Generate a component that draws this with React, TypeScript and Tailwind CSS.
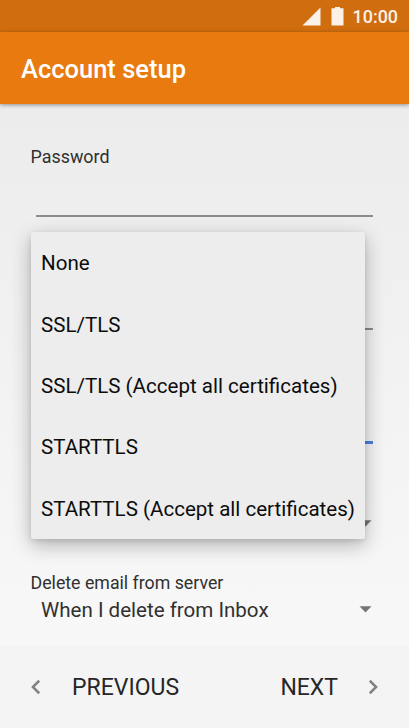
import { useState } from "react";

const SECURITY_OPTIONS = [
    "None",
    "SSL/TLS",
    "SSL/TLS (Accept all certificates)",
    "STARTTLS",
    "STARTTLS (Accept all certificates)",
];

function StatusBar() {
    return (
        <div className="flex h-8 shrink-0 items-center justify-end bg-[#cf6d0f] pr-[11px] text-[#fbf1e7]">
            <svg className="mr-[10px] h-[19px] w-[19px]" viewBox="0 0 19 19" fill="currentColor">
                <path d="M0.5 18.5 L18.5 0.5 V18.5 Z" />
            </svg>
            <svg className="mr-[9px] h-[19px] w-[13px]" viewBox="0 0 13 19" fill="currentColor">
                <path d="M4 0 H9 V1.3 H12.5 V18.5 H0.5 V1.3 H4 Z" />
            </svg>
            <span className="pt-px text-[17.9px] leading-8 font-medium">10:00</span>
        </div>
    );
}

function SpinnerArrow() {
    return (
        <svg className="h-[7px] w-[13px] text-[#757575]" viewBox="0 0 13 7" fill="currentColor">
            <path d="M0.5 0.3 H12.5 L6.5 6.5 Z" />
        </svg>
    );
}

function Chevron({ direction }: { direction: "left" | "right" }) {
    return (
        <svg className="h-4 w-[10px] text-[#828282]" viewBox="0 0 10 16" fill="none" stroke="currentColor" strokeWidth="2.5">
            <path d={direction === "left" ? "M9.2 1.7 L2.9 8 L9.2 14.3" : "M0.8 1.7 L7.1 8 L0.8 14.3"} />
        </svg>
    );
}

function SecurityMenu({ onSelect }: { onSelect: (option: string) => void }) {
    return (
        <ul className="absolute top-32 left-[30.5px] h-[307px] w-[334.5px] rounded-[2px] bg-[#ededed] shadow-[0_6px_20px_rgba(0,0,0,0.28),0_2px_5px_rgba(0,0,0,0.1)]">
            {SECURITY_OPTIONS.map(option => (
                <li key={option} className="h-[61.35px]">
                    <button
                        onClick={() => onSelect(option)}
                        className="block h-full w-full pt-[2px] pl-[10.5px] text-left text-[20.55px] whitespace-nowrap text-[#0c0c0c]"
                    >
                        {option}
                    </button>
                </li>
            ))}
        </ul>
    );
}

export default function App() {
    const [menuOpen, setMenuOpen] = useState(true);

    return (
        <div className="flex h-[728px] w-[409px] flex-col overflow-hidden bg-[#f4f4f4] font-['Roboto',sans-serif]">
            <StatusBar />
            <header className="relative z-10 flex h-[72px] shrink-0 items-center bg-[#e87a10] pt-[2px] pl-[21px] shadow-[0_1px_4px_rgba(0,0,0,0.4)]">
                <h1 className="text-[25.5px] font-medium text-white">Account setup</h1>
            </header>

            <main className="relative flex h-[541px] shrink-0 flex-col bg-linear-to-b from-[#ececec] to-[#f8f8f8] text-[#303030]">
                <label className="mt-[42px] ml-[30.5px] h-[22px] text-[17.9px] leading-[22px]">Password</label>
                <div className="mr-9 ml-9 h-[49px] border-b-2 border-[#8b8b8b]" />
                <div className="mr-9 ml-9 h-[113px] border-b-2 border-[#8b8b8b]" />
                <div className="mr-9 ml-9 h-[114px] border-b-[3px] border-[#4a80e0]" />
                <button onClick={() => setMenuOpen(true)} className="mr-[37px] flex h-[117px] items-start justify-end pt-[76px]">
                    <SpinnerArrow />
                </button>

                <label className="mt-[11px] ml-[30.5px] h-[22px] text-[17.75px] leading-[22px]">Delete email from server</label>
                <div className="mr-[37px] ml-[41px] flex h-8 items-center justify-between">
                    <span className="text-[20.55px]">When I delete from Inbox</span>
                    <span className="-mt-[2px]">
                        <SpinnerArrow />
                    </span>
                </div>

                {menuOpen && <SecurityMenu onSelect={() => setMenuOpen(false)} />}
            </main>

            <footer className="flex h-[83px] items-center justify-between pr-[30px] pl-[30px] text-[23px] text-[#262626]">
                <button className="flex items-center gap-8">
                    <Chevron direction="left" />
                    <span className="pt-[4px]">PREVIOUS</span>
                </button>
                <button className="flex items-center gap-[31px]">
                    <span className="pt-[4px]">NEXT</span>
                    <Chevron direction="right" />
                </button>
            </footer>
        </div>
    );
}
